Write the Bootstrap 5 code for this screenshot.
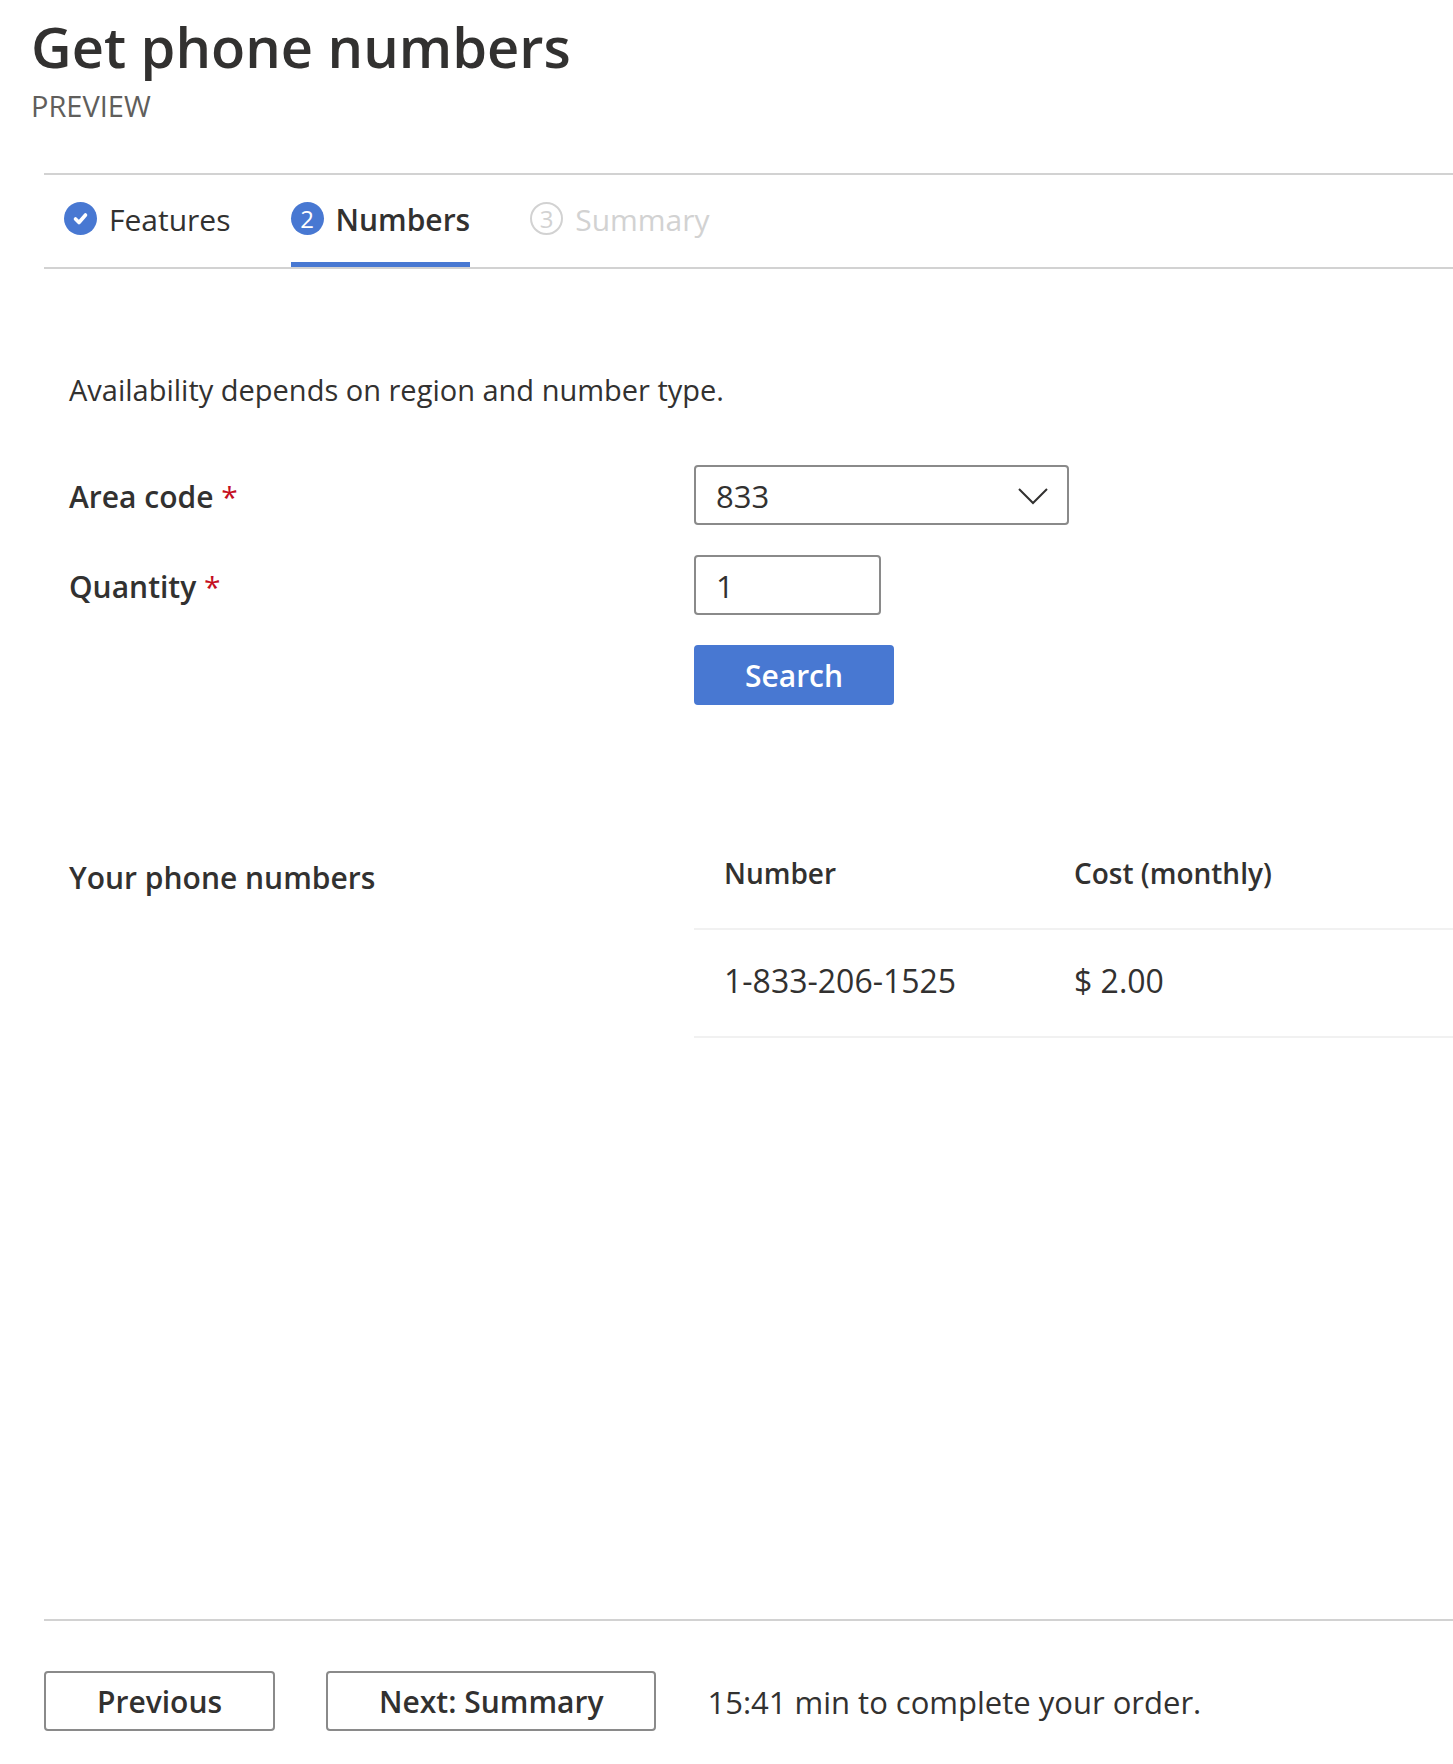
<!DOCTYPE html>
<html lang="en">
<head>
<meta charset="utf-8">
<meta name="viewport" content="width=device-width, initial-scale=1">
<title>Get phone numbers</title>
<link href="https://cdn.jsdelivr.net/npm/bootstrap@5.3.0/dist/css/bootstrap.min.css" rel="stylesheet">
<style>
  :root { --ink: #323130; --accent: #4878d2; --rule: #d2d2d2; --outline: #8a8a8a; }
  body { font-family: "Open Sans", "Noto Sans", sans-serif; font-size: 30px; line-height: 44px; color: var(--ink); background: #fff; }
  .page-head { padding: 10px 31px 0; margin-bottom: 47px; }
  .page-title { font-size: 56px; line-height: 72px; font-weight: 600; margin-bottom: 4px; }
  .page-tag { font-size: 29px; line-height: 40px; color: #605e5c; }
  .page-body { margin-left: 44px; }
  .wizard { border-top: 2px solid var(--rule); border-bottom: 2px solid var(--rule); padding-left: 20px; gap: 60px; }
  .wizard .nav-link { display: flex; align-items: center; gap: 12px; height: 92px; padding: 0; border-bottom: 5px solid transparent; color: var(--ink); }
  .wizard .nav-link.active { font-weight: 600; border-bottom-color: var(--accent); }
  .wizard .nav-link.disabled { color: var(--rule); }
  .step-name { padding-top: 3px; }
  .step-dot { width: 33px; height: 33px; border-radius: 50%; font-size: 24px; line-height: 33px; text-align: center; font-weight: 400; flex: none; }
  .step-dot.filled { background: var(--accent); color: #fff; }
  .step-dot.hollow { border: 2px solid var(--rule); line-height: 29px; }
  .panel { padding-left: 25px; }
  .note { font-size: 29px; line-height: 40px; margin: 101px 0 55px; }
  .field-label { flex: 0 0 625px; font-weight: 600; padding-top: 3px; }
  .req { color: #c50f1f; font-weight: 400; }
  .fields { gap: 30px; }
  .fields .form-select, .fields .form-control { height: 60px; border: 2px solid var(--outline); border-radius: 4px; padding: 2px 20px 0; font-size: 31px; line-height: 44px; color: var(--ink); }
  .fields .form-select { width: 375px; background-position: right 19px center; background-size: 30px 30px; background-image: url("data:image/svg+xml,%3Csvg xmlns='http://www.w3.org/2000/svg' viewBox='0 0 30 30'%3E%3Cpath d='M1 9l14 14L29 9' fill='none' stroke='%23323130' stroke-width='2'/%3E%3C/svg%3E"); }
  .fields .form-control { width: 187px; }
  .btn-box { height: 60px; border: 2px solid var(--outline); border-radius: 4px; padding: 2px 51px 0; font-size: 30px; line-height: 44px; font-weight: 600; color: var(--ink); }
  .btn-box.btn-search { background: var(--accent); border-color: var(--accent); color: #fff; width: 200px; padding: 2px 0 0; }
  .results { margin-top: 137px; }
  .results .field-label { padding-top: 14px; }
  .table.num-table { color: var(--ink); margin: 0; }
  .num-table > :not(caption) > * > * { border-bottom: 2px solid #f1f1f1; }
  .num-table th { font-size: 28px; line-height: 40px; font-weight: 600; padding: 11px 30px 35px; }
  .num-table td { font-size: 32px; padding: 29px 30px 33px; }
  .num-table th:first-child { width: 350px; }
  .footer-bar { border-top: 2px solid var(--rule); padding: 50px 0 33px; gap: 51px; }
  .timer { font-size: 31px; padding-top: 2px; }
</style>
</head>
<body>
<div class="d-flex flex-column min-vh-100">
  <header class="page-head">
    <h1 class="page-title">Get phone numbers</h1>
    <div class="page-tag">PREVIEW</div>
  </header>
  <main class="page-body">
    <nav class="nav wizard" aria-label="Steps">
      <a class="nav-link" href="#features">
        <svg class="flex-shrink-0" width="33" height="33" viewBox="0 0 33 33" aria-hidden="true"><circle cx="16.500" cy="16.500" r="16.500" fill="#4878d2"/><path d="M11.500 17l3.500 3.500 6.500-7.500" fill="none" stroke="#fff" stroke-width="3.600" stroke-linecap="round" stroke-linejoin="round"/></svg>
        <span class="step-name">Features</span>
      </a>
      <a class="nav-link active" href="#numbers" aria-current="step"><span class="step-dot filled">2</span><span class="step-name">Numbers</span></a>
      <a class="nav-link disabled" href="#summary" aria-disabled="true"><span class="step-dot hollow">3</span><span class="step-name">Summary</span></a>
    </nav>
    <div class="panel">
      <p class="note">Availability depends on region and number type.</p>
      <form class="fields d-flex flex-column">
        <div class="d-flex align-items-center">
          <label class="field-label" for="area">Area code <span class="req">*</span></label>
          <select class="form-select" id="area"><option>833</option></select>
        </div>
        <div class="d-flex align-items-center">
          <label class="field-label" for="qty">Quantity <span class="req">*</span></label>
          <input class="form-control" id="qty" type="text" inputmode="numeric" value="1">
        </div>
        <div class="d-flex">
          <div class="field-label"></div>
          <button class="btn btn-box btn-search" type="button">Search</button>
        </div>
      </form>
      <section class="results d-flex align-items-start">
        <div class="field-label" id="results-label">Your phone numbers</div>
        <table class="table num-table" aria-labelledby="results-label">
          <thead><tr><th scope="col">Number</th><th scope="col">Cost (monthly)</th></tr></thead>
          <tbody><tr><td>1-833-206-1525</td><td>$ 2.00</td></tr></tbody>
        </table>
      </section>
    </div>
  </main>
  <footer class="page-body mt-auto">
    <div class="footer-bar d-flex align-items-center">
      <button class="btn btn-box" type="button">Previous</button>
      <button class="btn btn-box" type="button">Next: Summary</button>
      <span class="timer">15:41 min to complete your order.</span>
    </div>
  </footer>
</div>
<script src="https://cdn.jsdelivr.net/npm/bootstrap@5.3.0/dist/js/bootstrap.bundle.min.js"></script>
</body>
</html>
